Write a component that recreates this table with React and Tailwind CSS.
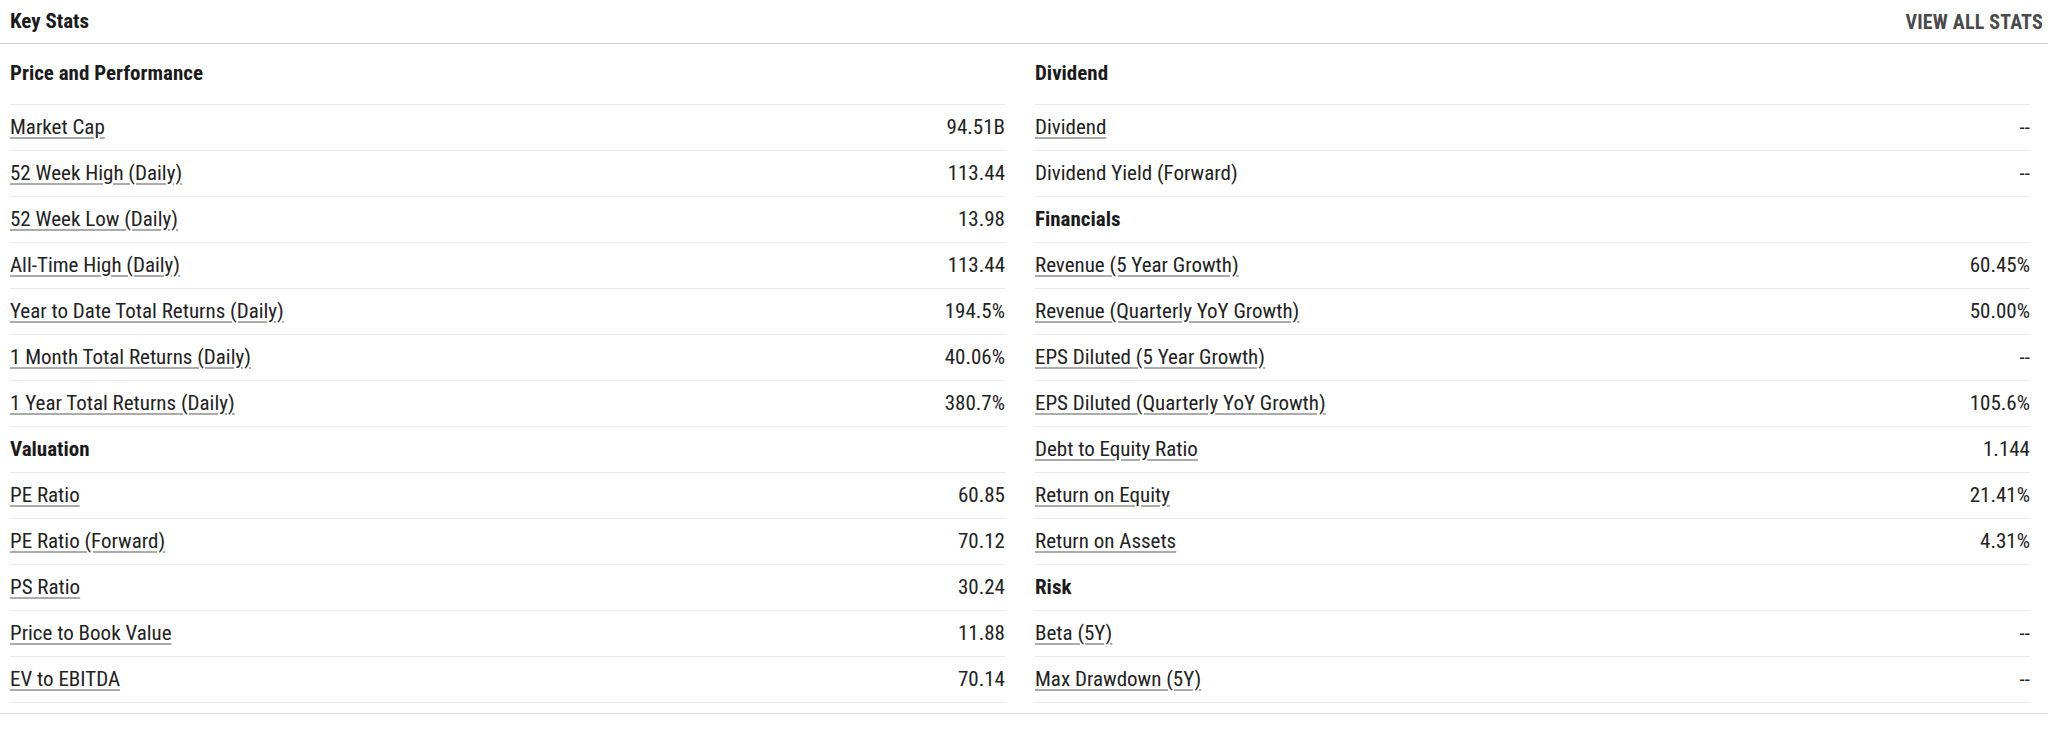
import React from "react";

const left = [
  { t: "Price and Performance", h: true },
  { t: "Market Cap", v: "94.51B" },
  { t: "52 Week High (Daily)", v: "113.44" },
  { t: "52 Week Low (Daily)", v: "13.98" },
  { t: "All-Time High (Daily)", v: "113.44" },
  { t: "Year to Date Total Returns (Daily)", v: "194.5%" },
  { t: "1 Month Total Returns (Daily)", v: "40.06%" },
  { t: "1 Year Total Returns (Daily)", v: "380.7%" },
  { t: "Valuation", h: true },
  { t: "PE Ratio", v: "60.85" },
  { t: "PE Ratio (Forward)", v: "70.12" },
  { t: "PS Ratio", v: "30.24" },
  { t: "Price to Book Value", v: "11.88" },
  { t: "EV to EBITDA", v: "70.14" },
];

const right = [
  { t: "Dividend", h: true },
  { t: "Dividend", v: "--" },
  { t: "Dividend Yield (Forward)", v: "--", plain: true },
  { t: "Financials", h: true },
  { t: "Revenue (5 Year Growth)", v: "60.45%" },
  { t: "Revenue (Quarterly YoY Growth)", v: "50.00%" },
  { t: "EPS Diluted (5 Year Growth)", v: "--" },
  { t: "EPS Diluted (Quarterly YoY Growth)", v: "105.6%" },
  { t: "Debt to Equity Ratio", v: "1.144" },
  { t: "Return on Equity", v: "21.41%" },
  { t: "Return on Assets", v: "4.31%" },
  { t: "Risk", h: true },
  { t: "Beta (5Y)", v: "--" },
  { t: "Max Drawdown (5Y)", v: "--" },
];

function Row({ r, first }) {
  const h = first ? "h-[61px]" : "h-[46px]";
  if (r.h) {
    return (
      <div className={`${h} flex items-center border-b border-[#ebebeb] font-bold text-[21px] text-[#1a1a1a]`}>
        {r.t}
      </div>
    );
  }
  return (
    <div className={`${h} flex items-center justify-between border-b border-[#ebebeb] text-[21px] text-[#222]`}>
      <span
        className={
          r.plain
            ? ""
            : "underline decoration-2 decoration-[#ababab] underline-offset-[3px]"
        }
      >
        {r.t}
      </span>
      <span>{r.v}</span>
    </div>
  );
}

export default function App() {
  return (
    <div
      className="w-full bg-white"
      style={{ fontFamily: '"Roboto Condensed", "Liberation Sans Narrow", Roboto, sans-serif' }}
    >
      <div className="h-[44px] flex items-center justify-between pl-[10px] pr-[5px] border-b border-[#cfcfcf]">
        <span className="font-bold text-[21px] text-[#1a1a1a]">Key Stats</span>
        <span className="font-bold text-[20px] text-[#4a4a4a] tracking-[0.2px]">VIEW ALL STATS</span>
      </div>
      <div className="grid grid-cols-2 gap-x-[30px] pl-[10px] pr-[18px] pb-[10px] border-b border-[#dcdcdc]">
        <div className="flex flex-col">
          {left.map((r, i) => (
            <Row key={i} r={r} first={i === 0} />
          ))}
        </div>
        <div className="flex flex-col">
          {right.map((r, i) => (
            <Row key={i} r={r} first={i === 0} />
          ))}
        </div>
      </div>
    </div>
  );
}
